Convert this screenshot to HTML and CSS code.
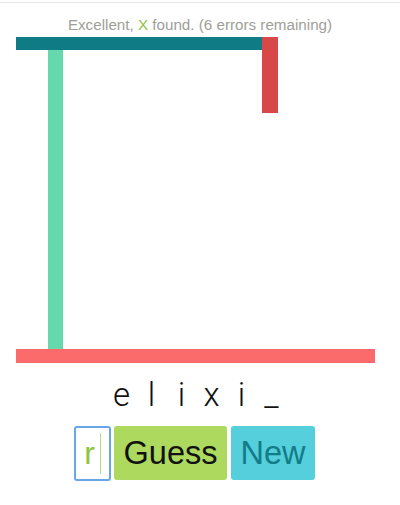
FILE: index.html
```html
<!DOCTYPE html>
<html>
<head>
<meta charset="utf-8">
<link rel="stylesheet" href="styles.css">
</head>
<body>
<div class="topline"></div>
<p class="status">Excellent, <span class="found">X</span> found. (6 errors remaining)</p>
<svg class="gallows" width="400" height="326" viewBox="0 0 400 326">
  <rect x="16" y="0" width="246" height="13" fill="#0f7b85"/>
  <rect x="262" y="0" width="16" height="76" fill="#d94848"/>
  <rect x="48" y="13" width="15" height="299" fill="#66d9ac"/>
  <rect x="16" y="312" width="359" height="14" fill="#fc6b6b"/>
</svg>
<div class="word"><span>e</span><span>l</span><span>i</span><span>x</span><span>i</span><span>_</span></div>
<div class="controls">
  <div class="guess-input"><span class="letter">r</span><span class="caret"></span></div>
  <button class="btn btn-guess">Guess</button>
  <button class="btn btn-new">New</button>
</div>
</body>
</html>
```
FILE: styles.css
```css
html, body {
  margin: 0;
  padding: 0;
  background: #ffffff;
  font-family: "Liberation Sans", Arial, sans-serif;
}
.topline {
  margin-top: 2px;
  border-top: 1px solid #e6e6e6;
}
.status {
  margin: 13px 0 0 0;
  font-size: 15.2px;
  line-height: 17px;
  color: #9e9e98;
  text-align: center;
}
.found {
  color: #8cc63f;
}
.gallows {
  display: block;
  margin-top: 4px;
}
.word {
  margin-top: 12px;
  display: flex;
  justify-content: center;
  padding-right: 7px;
  font-family: Roboto, "Liberation Sans", sans-serif;
  font-weight: 300;
  font-size: 33px;
  line-height: 40px;
  color: #111;
}
.word span {
  width: 30px;
  text-align: center;
}
.controls {
  margin-top: 11px;
  display: flex;
  justify-content: center;
  padding-right: 11px;
  gap: 3px;
}
.guess-input {
  box-sizing: border-box;
  width: 37px;
  height: 55px;
  border: 2px solid #6aa5e8;
  border-radius: 3px;
  display: flex;
  align-items: center;
  justify-content: center;
  gap: 5px;
  font-size: 32px;
  color: #8cc63f;
}
.caret {
  width: 1px;
  height: 41px;
  background: #b5dc8a;
}
.btn {
  box-sizing: border-box;
  height: 54px;
  border: 0;
  border-radius: 3px;
  font-family: "Liberation Sans", Arial, sans-serif;
  font-size: 32.5px;
  line-height: 54px;
  padding: 0 8px;
  margin: 0;
}
.btn-guess {
  width: 113px;
  background: #acd95e;
  color: #111;
}
.btn-new {
  width: 84px;
  background: #55cfdc;
  color: #127c87;
  margin-left: 1px;
}
```
